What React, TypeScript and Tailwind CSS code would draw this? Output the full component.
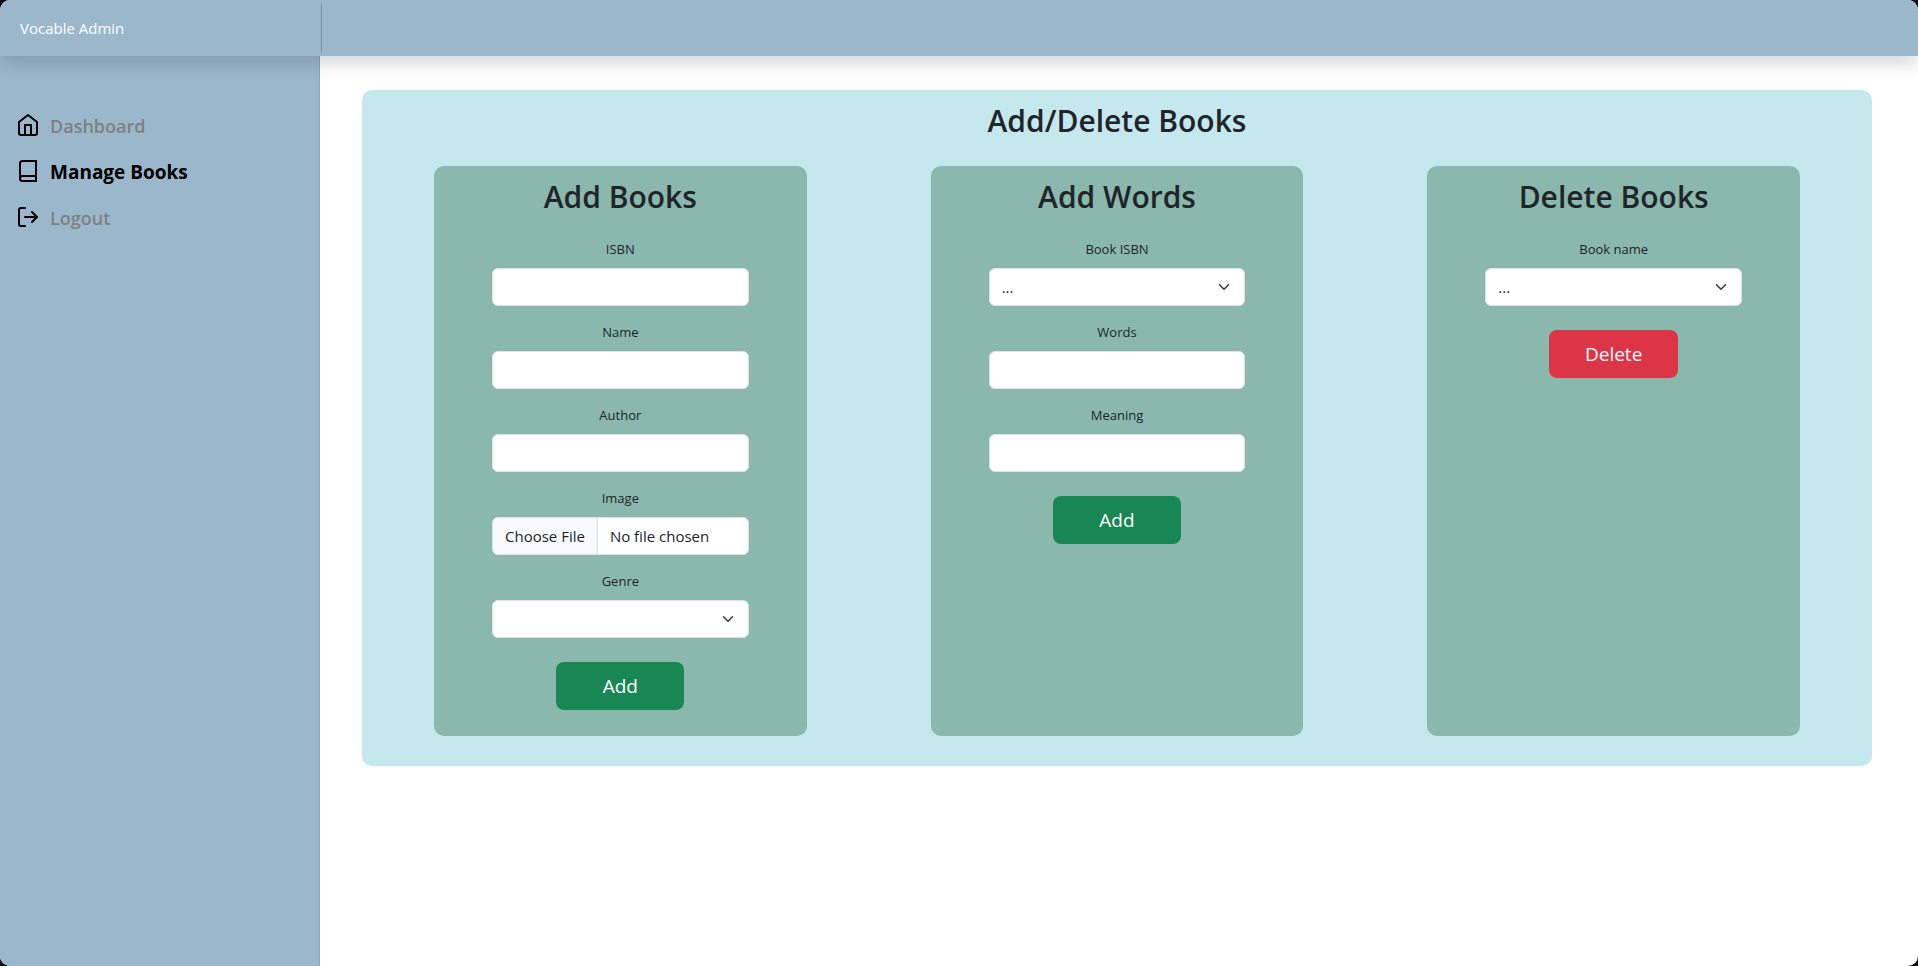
import { useId, type ReactNode } from "react";
import { FiBook, FiHome } from "react-icons/fi";

const control =
  "block h-[38px] w-full rounded-md border border-[#dee2e6] bg-white text-[15px] leading-6 text-[#212529]";

function LogoutIcon() {
  return (
    <svg width="24" height="24" viewBox="0 0 24 24" fill="none" stroke="currentColor" strokeWidth="2" strokeLinecap="round" strokeLinejoin="round" aria-hidden="true">
      <path d="M9 3H5a2 2 0 0 0-2 2v14a2 2 0 0 0 2 2h4" />
      <path d="M16 7l5 5-5 5" />
      <path d="M21 12H9" />
    </svg>
  );
}

function Field({ label, children }: { label: string; children: (id: string) => ReactNode }) {
  const id = useId();
  return (
    <div className="mt-4 w-full">
      <label htmlFor={id} className="mb-2 block text-center text-[13px] leading-[21px]">
        {label}
      </label>
      {children(id)}
    </div>
  );
}

function TextField({ label }: { label: string }) {
  return <Field label={label}>{(id) => <input id={id} type="text" className={`${control} px-3`} />}</Field>;
}

function SelectField({ label, value = "" }: { label: string; value?: string }) {
  return (
    <Field label={label}>
      {(id) => (
        <div className="grid items-center">
          <select id={id} className={`${control} col-start-1 row-start-1 appearance-none pr-9 pl-3`}>
            <option>{value}</option>
          </select>
          <svg className="pointer-events-none col-start-1 row-start-1 mr-[14px] justify-self-end" width="14" height="12" viewBox="0 0 16 16" fill="none" stroke="#343a40" strokeWidth="2" strokeLinecap="round" strokeLinejoin="round" aria-hidden="true">
            <path d="m2 5 6 6 6-6" />
          </svg>
        </div>
      )}
    </Field>
  );
}

function Card({ title, children }: { title: string; children: ReactNode }) {
  return (
    <section className="flex flex-col items-center rounded-[10px] bg-[#8ab8ad] px-[58px] pt-3 pb-[26px]">
      <h2 className="mb-[7px] text-[30px] leading-[38px] font-semibold whitespace-nowrap">{title}</h2>
      {children}
    </section>
  );
}

function ActionButton({ danger, children }: { danger?: boolean; children: ReactNode }) {
  return (
    <button
      type="button"
      className={`mt-6 h-12 w-1/2 rounded-lg text-[19px] leading-[30px] text-white ${danger ? "bg-[#dc3545]" : "bg-[#198754]"}`}
    >
      {children}
    </button>
  );
}

function NavItem({ icon, active, children }: { icon: ReactNode; active?: boolean; children: ReactNode }) {
  return (
    <a href="#" aria-current={active ? "page" : undefined} className="flex h-[46px] items-center gap-[10px] px-4 text-black">
      {icon}
      <span className={`pt-0.5 leading-[30px] ${active ? "text-[19px] font-bold text-black" : "text-[18px] font-semibold text-[#808080]"}`}>
        {children}
      </span>
    </a>
  );
}

export default function App() {
  return (
    <div className="min-h-screen bg-[#05060f] font-['Open_Sans','Noto_Sans',sans-serif] text-[#212529]">
      <div className="flex min-h-screen flex-col overflow-hidden rounded-[10px] bg-white">
        <header className="relative flex h-14 items-center bg-[#9bb7cc] shadow-[0_8px_16px_rgba(0,0,0,0.15)]">
          <div className="flex h-12 w-[322px] items-center border-r border-[#6f8da3] pl-5 text-[15px] text-white">
            Vocable Admin
          </div>
        </header>
        <div className="flex grow">
          <nav className="w-80 shrink-0 border-r border-[#8aa6bc] bg-[#9bb7cc] pt-[46px]">
            <NavItem icon={<FiHome size={24} />}>Dashboard</NavItem>
            <NavItem icon={<FiBook size={24} />} active>Manage Books</NavItem>
            <NavItem icon={<LogoutIcon />}>Logout</NavItem>
          </nav>
          <main className="grow pt-[34px] pr-[46px] pb-8 pl-[42px]">
            <div className="rounded-[10px] bg-[#c4e8ed] px-[72px] pt-3 pb-[30px]">
              <h1 className="mb-[26px] text-center text-[30px] leading-[38px] font-semibold">Add/Delete Books</h1>
              <div className="grid grid-cols-3 gap-[124px]">
                <Card title="Add Books">
                  <TextField label="ISBN" />
                  <TextField label="Name" />
                  <TextField label="Author" />
                  <Field label="Image">
                    {(id) => (
                      <input
                        id={id}
                        type="file"
                        className={`${control} overflow-hidden file:mr-3 file:h-9 file:border-0 file:border-r file:border-solid file:border-[#dee2e6] file:bg-[#f8f9fa] file:px-3 file:text-[#212529]`}
                      />
                    )}
                  </Field>
                  <SelectField label="Genre" />
                  <ActionButton>Add</ActionButton>
                </Card>
                <Card title="Add Words">
                  <SelectField label="Book ISBN" value="..." />
                  <TextField label="Words" />
                  <TextField label="Meaning" />
                  <ActionButton>Add</ActionButton>
                </Card>
                <Card title="Delete Books">
                  <SelectField label="Book name" value="..." />
                  <ActionButton danger>Delete</ActionButton>
                </Card>
              </div>
            </div>
          </main>
        </div>
      </div>
    </div>
  );
}
